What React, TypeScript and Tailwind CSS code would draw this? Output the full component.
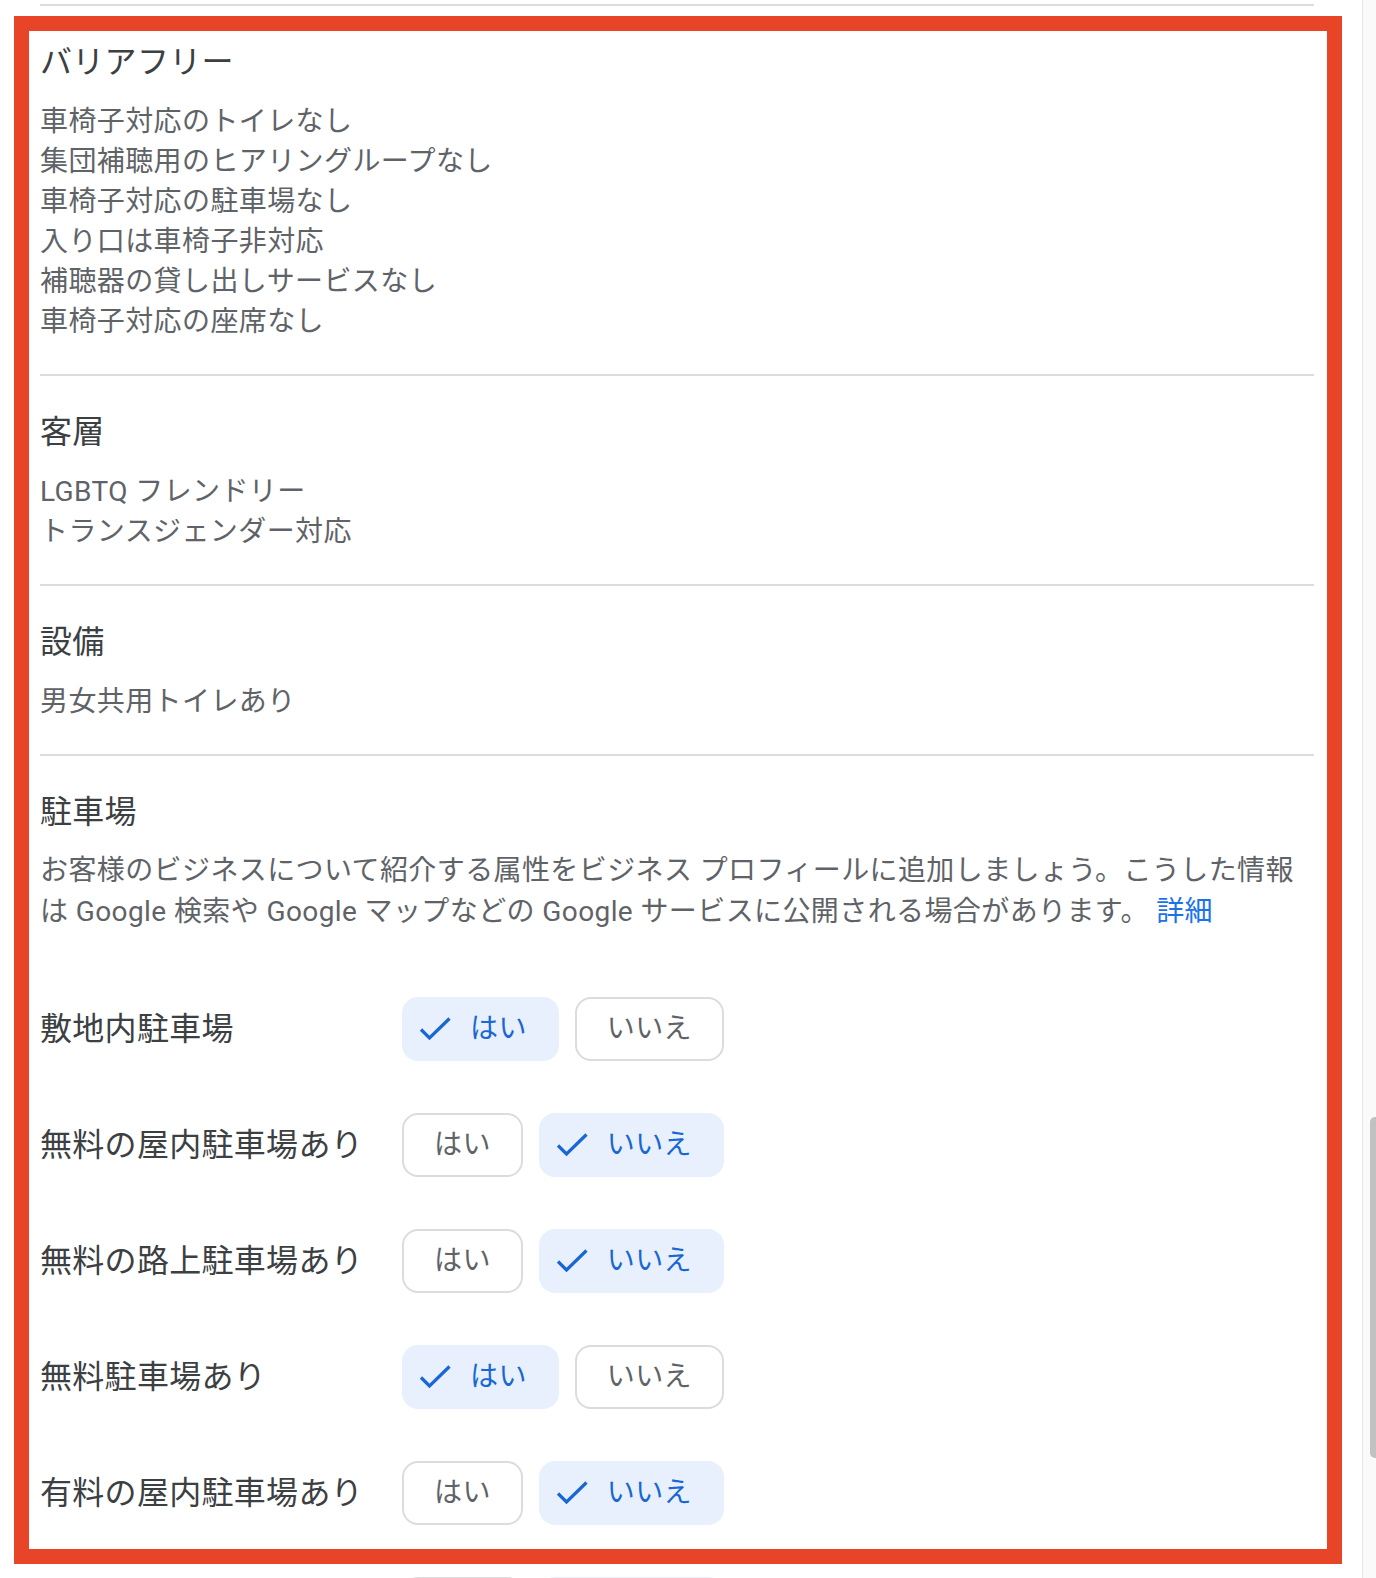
import { useState } from "react";

const font = { fontFamily: 'Roboto, "Noto Sans CJK JP", sans-serif' };

const sections = [
  {
    title: "バリアフリー",
    items: [
      "車椅子対応のトイレなし",
      "集団補聴用のヒアリングループなし",
      "車椅子対応の駐車場なし",
      "入り口は車椅子非対応",
      "補聴器の貸し出しサービスなし",
      "車椅子対応の座席なし",
    ],
  },
  { title: "客層", items: ["LGBTQ フレンドリー", "トランスジェンダー対応"] },
  { title: "設備", items: ["男女共用トイレあり"] },
];

const parkingRows = [
  { label: "敷地内駐車場", value: true },
  { label: "無料の屋内駐車場あり", value: false },
  { label: "無料の路上駐車場あり", value: false },
  { label: "無料駐車場あり", value: true },
  { label: "有料の屋内駐車場あり", value: false },
  { label: "有料の路上駐車場あり", value: false },
];

function Check() {
  return (
    <svg width="36" height="36" viewBox="0 0 36 36" fill="none" className="shrink-0">
      <polyline points="3,18.5 11.5,27 31.5,7.5" stroke="#1967d2" strokeWidth="3.2" />
    </svg>
  );
}

function Chip({ label, selected, onClick }: { label: string; selected: boolean; onClick: () => void }) {
  if (selected) {
    return (
      <button
        type="button"
        onClick={onClick}
        className="flex h-[64px] items-center gap-[16px] rounded-[16px] bg-[#e8f0fe] pl-[16px] pr-[32px] text-[28px] leading-[40px] tracking-[0.4px] text-[#1967d2]"
      >
        <Check />
        {label}
      </button>
    );
  }
  return (
    <button
      type="button"
      onClick={onClick}
      className="flex h-[64px] items-center rounded-[16px] border-2 border-[#dadce0] bg-white px-[30px] text-[28px] leading-[40px] tracking-[0.4px] text-[#5f6368]"
    >
      {label}
    </button>
  );
}

export default function App() {
  const [values, setValues] = useState(parkingRows.map((row) => row.value));

  const setValue = (index: number, value: boolean) =>
    setValues((prev) => prev.map((v, i) => (i === index ? value : v)));

  return (
    <div className="relative flex h-[1578px] overflow-hidden bg-white" style={font}>
      <main className="flex-1 pl-[40px] pr-[48px] pt-[4px]">
        {sections.map((section) => (
          <section key={section.title} className="border-t-2 border-[#dadce0] pb-[32px] pt-[32px]">
            <h2 className="text-[32px] font-normal leading-[48px] tracking-[0.3px] text-[#3c4043]">{section.title}</h2>
            <ul className="mt-[16px] text-[28px] leading-[40px] tracking-[0.4px] text-[#5f6368]">
              {section.items.map((item) => (
                <li key={item}>{item}</li>
              ))}
            </ul>
          </section>
        ))}

        <section className="border-t-2 border-[#dadce0] pt-[32px]">
          <h2 className="text-[32px] font-normal leading-[48px] tracking-[0.3px] text-[#3c4043]">駐車場</h2>
          <p className="mt-[14px] text-[28px] leading-[41px] tracking-[0.4px] text-[#5f6368]">
            お客様のビジネスについて紹介する属性をビジネス プロフィールに追加しましょう。こうした情報
            <br />
            は Google 検索や Google マップなどの Google サービスに公開される場合があります。{" "}
            <a href="#" className="text-[#1a73e8]">詳細</a>
          </p>

          <div className="mt-[65px] flex flex-col gap-[52px]">
            {parkingRows.map((row, index) => (
              <div key={row.label} className="flex items-center">
                <div className="w-[362px] shrink-0 text-[32px] leading-[48px] tracking-[0.3px] text-[#3c4043]">{row.label}</div>
                <div className="flex gap-[16px]">
                  <Chip label="はい" selected={values[index]} onClick={() => setValue(index, true)} />
                  <Chip label="いいえ" selected={!values[index]} onClick={() => setValue(index, false)} />
                </div>
              </div>
            ))}
          </div>
        </section>
      </main>

      <div className="relative w-[14px] shrink-0 border-l border-[#e6e6e6] bg-[#fafafa]">
        <div className="absolute left-[7px] top-[1117px] h-[341px] w-[10px] rounded-[5px] bg-[#c1c1c1]" />
      </div>

      <div className="pointer-events-none absolute left-[14px] top-[16px] h-[1548px] w-[1328px] border-[15px] border-[#e84428]" />
    </div>
  );
}
